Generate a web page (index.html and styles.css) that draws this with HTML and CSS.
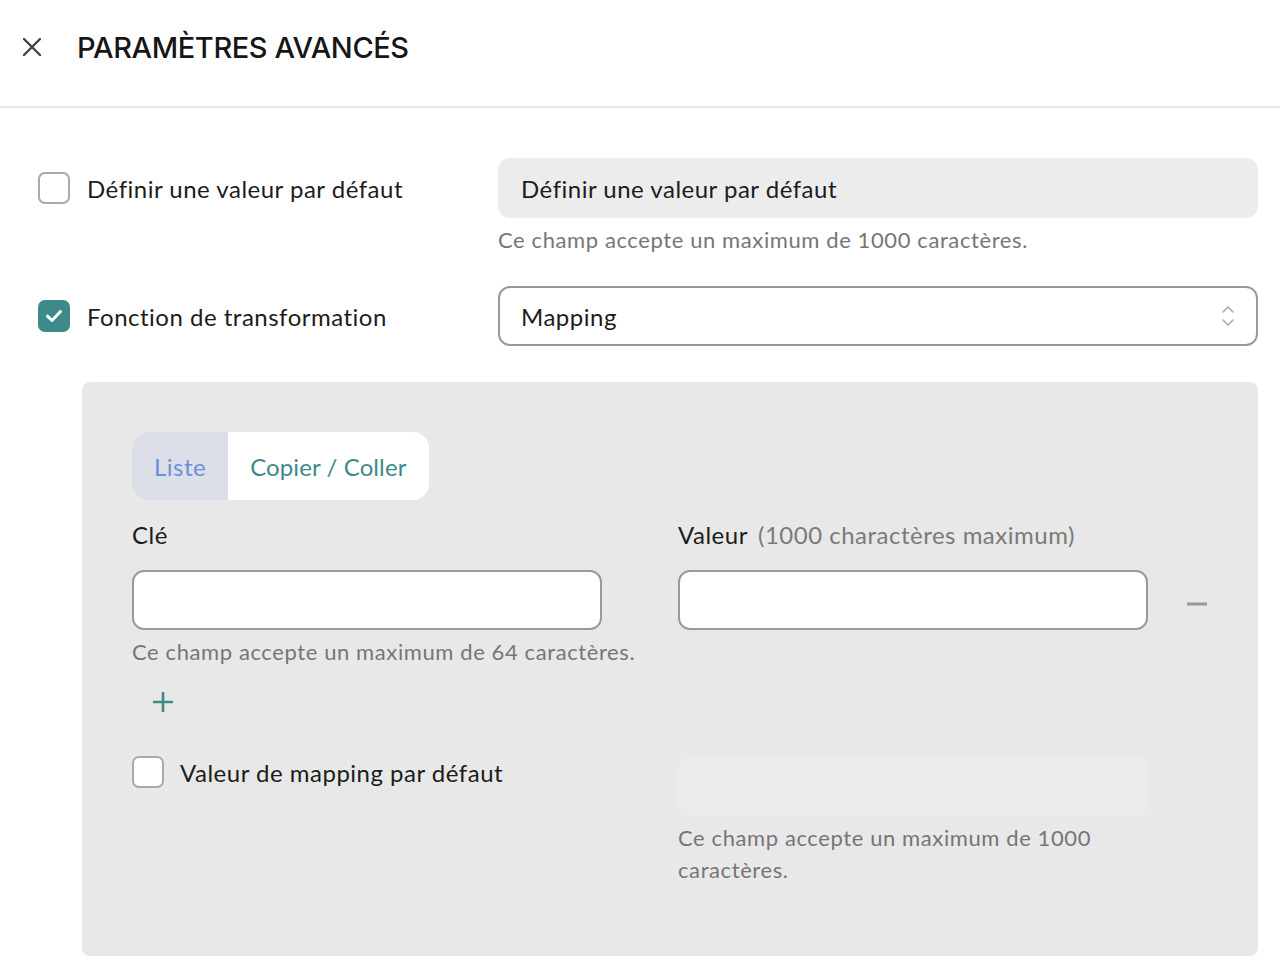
FILE: index.html
```html
<!DOCTYPE html>
<html lang="fr">
<head>
    <meta charset="UTF-8">
    <meta name="viewport" content="width=device-width, initial-scale=1.0">
    <title>Paramètres avancés</title>
    <link rel="stylesheet" href="styles.css">
</head>
<body>
    <header class="topbar">
        <button class="close-btn" aria-label="Fermer">
            <svg width="18" height="18" viewBox="0 0 18 18">
                <path d="M1 1L17 17M17 1L1 17" stroke="#444" stroke-width="2.4" stroke-linecap="round"/>
            </svg>
        </button>
        <h1>PARAMÈTRES AVANCÉS</h1>
    </header>

    <main class="content">
        <div class="row">
            <label class="check">
                <span class="box"></span>
                <span>Définir une valeur par défaut</span>
            </label>
            <div class="field">
                <div class="input filled">Définir une valeur par défaut</div>
                <p class="hint">Ce champ accepte un maximum de 1000 caractères.</p>
            </div>
        </div>

        <div class="row">
            <label class="check">
                <span class="box checked">
                    <svg width="18" height="14" viewBox="0 0 18 14">
                        <path d="M2.5 7.2L7 11.5L15.5 2.5" fill="none" stroke="#fff" stroke-width="3" stroke-linecap="round" stroke-linejoin="round"/>
                    </svg>
                </span>
                <span>Fonction de transformation</span>
            </label>
            <div class="field">
                <div class="input select">
                    <span>Mapping</span>
                    <svg width="16" height="24" viewBox="0 0 16 24">
                        <path d="M3 8L8 3L13 8M3 16L8 21L13 16" fill="none" stroke="#aaa" stroke-width="1.6" stroke-linecap="round" stroke-linejoin="round"/>
                    </svg>
                </div>
            </div>
        </div>

        <section class="panel">
            <div class="tabs">
                <span class="tab active">Liste</span>
                <span class="tab">Copier / Coller</span>
            </div>

            <div class="map-grid">
                <div class="col-label">Clé</div>
                <div class="col-label">Valeur <span class="muted">(1000 charactères maximum)</span></div>
                <div></div>

                <div class="cell">
                    <div class="input"></div>
                    <p class="hint">Ce champ accepte un maximum de 64 caractères.</p>
                </div>
                <div class="cell">
                    <div class="input"></div>
                </div>
                <div class="cell minus">
                    <svg width="22" height="4" viewBox="0 0 22 4">
                        <path d="M1 2H21" stroke="#999" stroke-width="3"/>
                    </svg>
                </div>
            </div>

            <button class="add-btn" aria-label="Ajouter">
                <svg width="22" height="22" viewBox="0 0 22 22">
                    <path d="M11 1V21M1 11H21" stroke="#3e8a8a" stroke-width="2.6"/>
                </svg>
            </button>

            <div class="map-grid default-row">
                <label class="check">
                    <span class="box"></span>
                    <span>Valeur de mapping par défaut</span>
                </label>
                <div class="cell">
                    <div class="input disabled"></div>
                    <p class="hint">Ce champ accepte un maximum de 1000 caractères.</p>
                </div>
                <div></div>
            </div>
        </section>
    </main>
</body>
</html>
```

FILE: styles.css
```css
* {
    margin: 0;
    padding: 0;
    box-sizing: border-box;
}

body {
    font-family: Lato, "Noto Sans", sans-serif;
    font-size: 24px;
    letter-spacing: 0.5px;
    color: #1c1c1c;
    background: #fff;
}

/* Header */

.topbar {
    display: flex;
    align-items: center;
    height: 108px;
    padding: 0 0 12px 23px;
    border-bottom: 2px solid #e6e6e6;
}

.close-btn {
    display: flex;
    border: none;
    background: none;
    cursor: pointer;
}

.topbar h1 {
    margin-left: 36px;
    font-family: Inter, sans-serif;
    font-size: 29px;
    font-weight: 500;
    color: #161616;
    letter-spacing: -0.4px;
}

/* Main form */

.content {
    padding: 50px 22px 20px 38px;
}

.row {
    display: grid;
    grid-template-columns: 460px 1fr;
    margin-bottom: 30px;
}

.check {
    display: flex;
    align-items: center;
    gap: 17px;
    height: 60px;
    cursor: pointer;
}

.box {
    display: flex;
    align-items: center;
    justify-content: center;
    width: 32px;
    height: 32px;
    border: 2px solid #aaa;
    border-radius: 7px;
    background: #fff;
    flex-shrink: 0;
}

.box.checked {
    background: #3e8a8a;
    border-color: #3e8a8a;
}

.input {
    height: 60px;
    border: 2px solid #9a9a9a;
    border-radius: 12px;
    background: #fff;
    padding: 0 21px;
    display: flex;
    align-items: center;
}

.input.filled {
    background: #ececec;
    border-color: #ececec;
}

.input.select {
    justify-content: space-between;
    padding-right: 20px;
}

.input.disabled {
    background: #ebebeb;
    border-color: #ebebeb;
}

.hint {
    margin-top: 6px;
    font-size: 22px;
    letter-spacing: 0.6px;
    line-height: 32px;
    color: #767676;
}

/* Mapping panel */

.panel {
    margin: 36px 0 0 44px;
    padding: 50px 50px 70px;
    background: #e8e8e8;
    border-radius: 8px;
}

.tabs {
    display: inline-flex;
    height: 68px;
    border-radius: 16px;
    overflow: hidden;
    background: #fff;
}

.tab {
    display: flex;
    align-items: center;
    padding: 0 22px;
    color: #3e8a8a;
    letter-spacing: 0.1px;
}

.tab.active {
    background: #dcdfe7;
    color: #6b8fdc;
    letter-spacing: 0.5px;
}

.map-grid {
    display: grid;
    grid-template-columns: 546px 470px 60px;
}

.col-label {
    margin: 20px 0 21px;
}

.muted {
    margin-left: 4px;
    color: #7a7a7a;
}

.cell .input {
    width: 470px;
}

.minus {
    display: flex;
    align-items: center;
    justify-content: flex-end;
    height: 60px;
    padding-top: 8px;
}

.add-btn {
    display: flex;
    margin: 23px 0 0 20px;
    border: none;
    background: none;
    cursor: pointer;
}

.default-row {
    margin-top: 43px;
}

.default-row .check {
    align-self: start;
    height: 32px;
    gap: 16px;
}

.default-row .hint {
    margin-top: 6px;
}
```
